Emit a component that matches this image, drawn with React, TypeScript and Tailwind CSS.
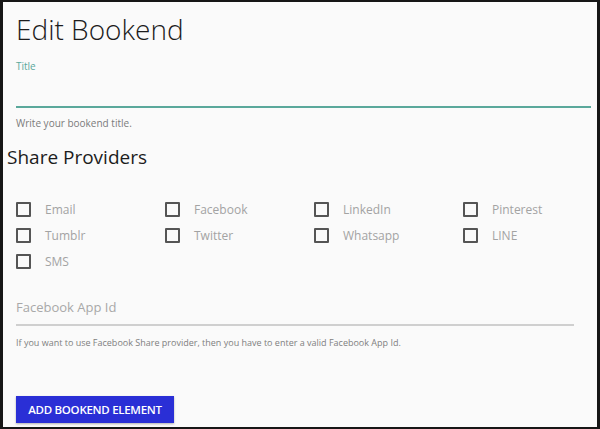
import React from 'react';

const providers = [
  'Email',
  'Facebook',
  'LinkedIn',
  'Pinterest',
  'Tumblr',
  'Twitter',
  'Whatsapp',
  'LINE',
  'SMS',
];

export default function App() {
  return (
    <div className="w-[600px] h-[429px] bg-[#161616] pt-[2px] pl-[3px] pr-[3px] pb-[2px] font-['Open_Sans',sans-serif]">
      <div className="h-full bg-[#fafafa] pl-[13px] pr-[6px] overflow-hidden">
        <h1 className="pt-[7px] text-[28px] leading-[40px] font-light text-[#1c1c1c]">Edit Bookend</h1>

        <div className="mt-[10px]">
          <label className="block text-[10px] leading-[14px] text-[#5aa89b]">Title</label>
          <input
            type="text"
            className="block w-full h-[35px] bg-transparent border-b-2 border-[#5aa89b] outline-none text-sm"
          />
          <p className="mt-[8px] text-[10px] leading-[14px] text-[#7a7a7a]">Write your bookend title.</p>
        </div>

        <h2 className="-ml-[9px] mt-[13px] text-[19px] leading-[28px] text-[#1c1c1c]">Share Providers</h2>

        <div className="mt-[31px] grid grid-cols-4 w-[596px] gap-y-[11px]">
          {providers.map((p) => (
            <label key={p} className="flex items-center h-[15px]">
              <span className="w-[15px] h-[15px] border-2 border-[#555] rounded-[1px]" />
              <span className="ml-[14px] text-[12px] text-[#a3a3a3]">{p}</span>
            </label>
          ))}
        </div>

        <div className="mt-[20px] w-[558px]">
          <input
            type="text"
            placeholder="Facebook App Id"
            className="block w-full h-[37px] bg-transparent border-b-2 border-[#cfcfcf] outline-none text-[13px] placeholder:text-[#a8a8a8]"
          />
          <p className="mt-[10px] text-[9px] leading-[14px] text-[#808080]">
            If you want to use Facebook Share provider, then you have to enter a valid Facebook App Id.
          </p>
        </div>

        <button className="mt-[46px] w-[158px] h-[27px] bg-[#2a2fd6] text-white text-[11.5px] font-semibold tracking-tight shadow-[0_1px_2px_rgba(0,0,0,0.3)]">
          ADD BOOKEND ELEMENT
        </button>
      </div>
    </div>
  );
}
